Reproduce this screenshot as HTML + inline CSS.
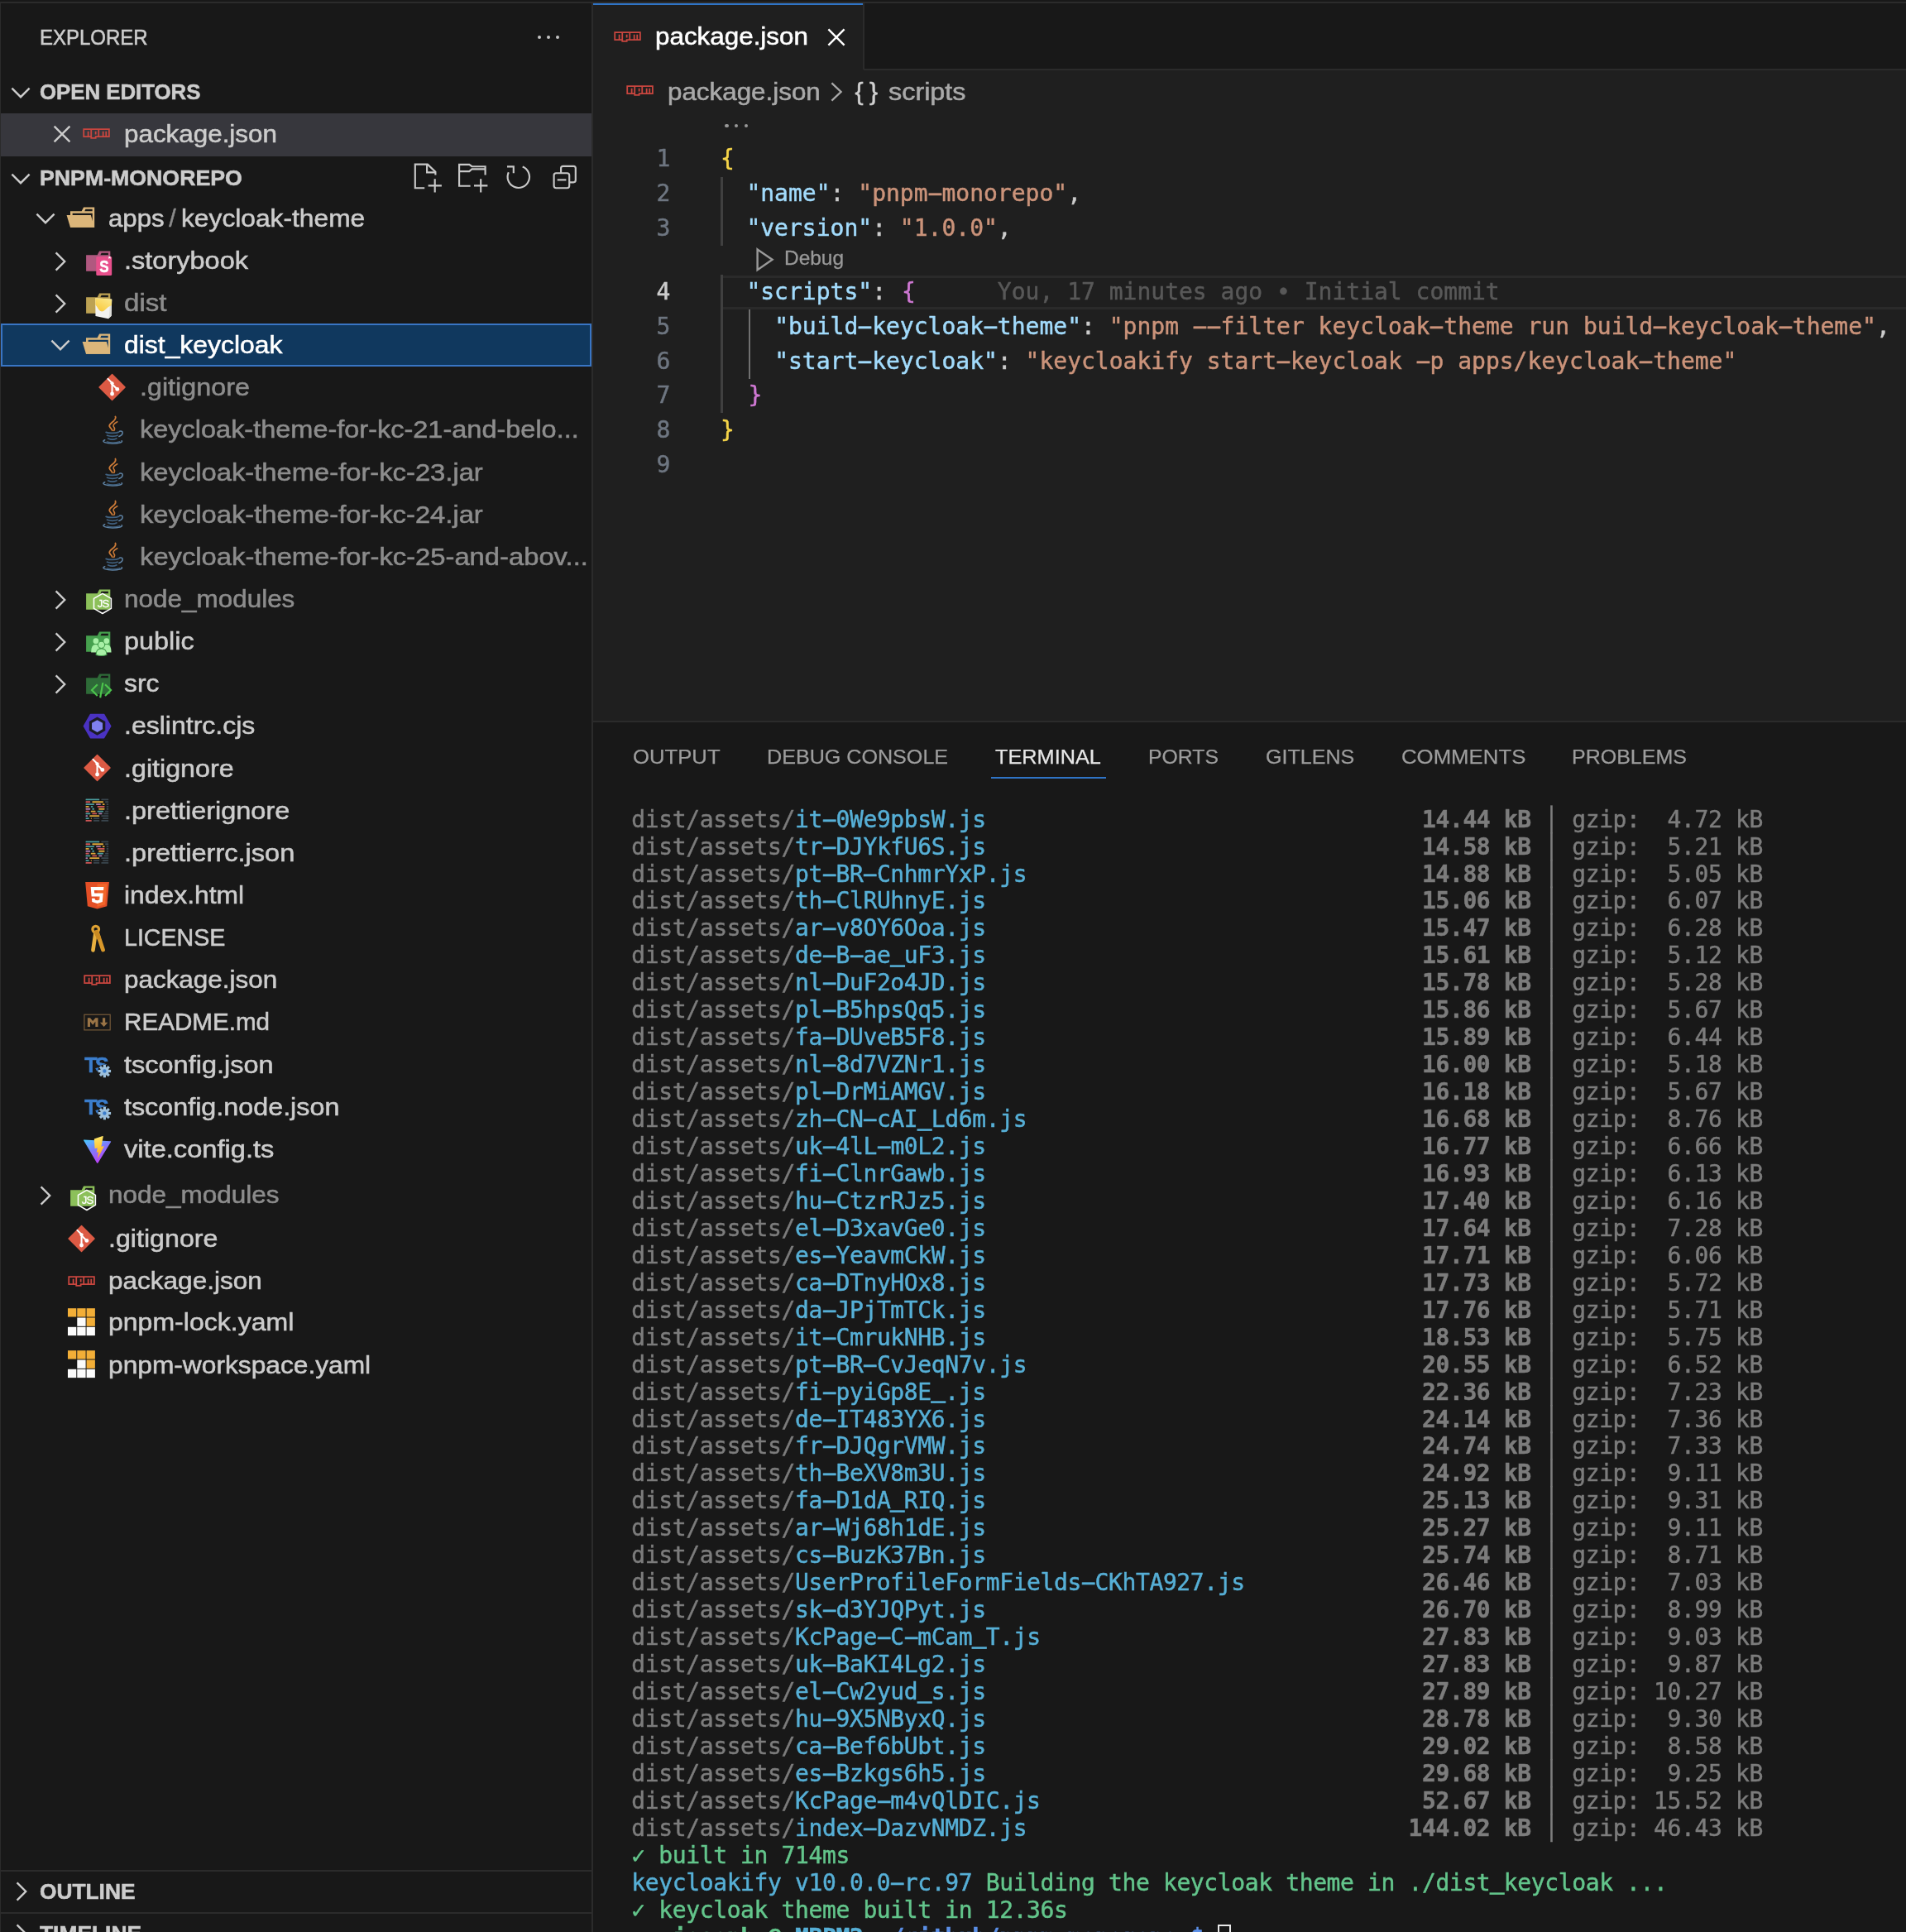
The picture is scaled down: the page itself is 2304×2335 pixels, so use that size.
<!DOCTYPE html>
<html lang="en"><head><meta charset="utf-8"><title>package.json — pnpm-monorepo</title>
<style>
html,body{margin:0;padding:0;background:#181818;}
body{width:2304px;height:2335px;overflow:hidden;position:relative;font-family:"Liberation Sans", "DejaVu Sans", sans-serif;}
#app{position:absolute;left:0;top:0;width:2304px;height:2335px;will-change:transform;}
.r{position:absolute;}
.s{position:absolute;overflow:visible;}
.t{position:absolute;white-space:pre;line-height:44px;height:44px;-webkit-text-stroke:0.55px currentColor;}
.t.m{font-family:"DejaVu Sans Mono", "Liberation Mono", monospace;-webkit-text-stroke:0.45px currentColor;}
.t.m span{-webkit-text-stroke:0.45px currentColor;}
.h{display:inline-block;transform:scaleX(2.1);}
</style></head>
<body>
<div id="app">
<div class="r" style="left:0.00px;top:0.00px;width:2304.00px;height:2335.00px;background:#181818;"></div>
<div class="r" style="left:717.00px;top:85.00px;width:1587.00px;height:787.00px;background:#1f1f1f;"></div>
<div class="r" style="left:0.00px;top:2.00px;width:2304.00px;height:2.00px;background:#2b2b2b;"></div>
<div class="r" style="left:0.00px;top:4.00px;width:1.20px;height:2335.00px;background:#2b2b2b;"></div>
<div class="r" style="left:715.00px;top:4.00px;width:2.00px;height:2335.00px;background:#2b2b2b;"></div>
<div class="t " style="left:48.40px;top:23.20px;font-size:25.5px;color:#cccccc;"><span id="t1" style="display:inline-block;transform-origin:0 50%;transform:scaleX(0.9406)">EXPLORER</span></div>
<div class="r" style="left:649.5px;top:42.5px;width:4.2px;height:4.2px;border-radius:50%;background:#c4c4c4"></div>
<div class="r" style="left:660.5px;top:42.5px;width:4.2px;height:4.2px;border-radius:50%;background:#c4c4c4"></div>
<div class="r" style="left:671.5px;top:42.5px;width:4.2px;height:4.2px;border-radius:50%;background:#c4c4c4"></div>
<svg class="s" style="left:10.50px;top:102.20px;" width="28.00" height="20.00" viewBox="0 0 28 20"><path d="M3.4,4.6 L14,15.2 L24.6,4.6" fill="none" stroke="#cccccc" stroke-width="2.4" stroke-linejoin="miter"/></svg>
<div class="t " style="left:48.30px;top:89.00px;font-size:25.5px;color:#cccccc;font-weight:bold;"><span id="t2" style="display:inline-block;transform-origin:0 50%;transform:scaleX(1.0115)">OPEN EDITORS</span></div>
<div class="r" style="left:1.20px;top:137.00px;width:713.80px;height:51.60px;background:#37373d;"></div>
<svg class="s" style="left:63.40px;top:149.60px;" width="24.00" height="24.00" viewBox="0 0 24 24"><path d="M2.5999999999999996,2.5999999999999996 L21.4,21.4 M21.4,2.5999999999999996 L2.5999999999999996,21.4" fill="none" stroke="#cccccc" stroke-width="2.4"/></svg>
<svg class="s" style="left:98.40px;top:143.05px;" width="37.10" height="37.10" viewBox="0 0 32 32"><path fill-rule="evenodd" d="M2,10.555H30v9.335H16v1.556H9.778V19.889H2Zm1.556,7.779H6.667V13.666H8.222v4.667H9.778V12.111H3.556Zm7.778-6.223v7.779h3.111V18.334h3.111V12.111Zm3.111,1.556H16v3.112H14.444Zm4.667-1.556v6.223h3.111V13.666h1.556v4.667h1.556V13.666h1.556v4.667h1.556V12.111Z" fill="#c9463f"/></svg>
<div class="t " style="left:150.00px;top:139.90px;font-size:30.16px;color:#cccccc;"><span id="t3" style="display:inline-block;transform-origin:0 50%;transform:scaleX(1.0407)">package.json</span></div>
<svg class="s" style="left:10.50px;top:205.60px;" width="28.00" height="20.00" viewBox="0 0 28 20"><path d="M3.4,4.6 L14,15.2 L24.6,4.6" fill="none" stroke="#cccccc" stroke-width="2.4" stroke-linejoin="miter"/></svg>
<div class="t " style="left:48.30px;top:192.60px;font-size:25.5px;color:#cccccc;font-weight:bold;"><span id="t4" style="display:inline-block;transform-origin:0 50%;transform:scaleX(1.0474)">PNPM-MONOREPO</span></div>
<svg class="s" style="left:0;top:0" width="716" height="260" viewBox="0 0 716 260"><g fill="none" stroke="#c8c8c8" stroke-width="2.15" stroke-linejoin="miter"><polyline points="513.2,227.2 501.8,227.2 501.8,198.6 516.9,198.6 526.4,207.7 526.4,211.5"/><polyline points="516.1,198.6 516.1,208.3 526.4,208.3"/><path d="M517.6,224.3 H533.9 M525.7,216.3 V232.5"/><polyline points="568.6,224.7 555.1,224.7 555.1,198.9 567.3,198.9 570.5,201.2 586.6,201.2 586.6,211.5"/><polyline points="555.1,207.1 567.3,207.1 570.5,204.3 586.6,204.3"/><path d="M573.0,224.3 H589.4 M581.2,216.3 V232.5"/><path d="M631.7,201.5 A13.2,13.2 0 1 1 614.8,208.2"/><polyline points="613.0,201.4 620.8,201.4 620.8,209.2"/><path d="M678.1,209.2 V203.3 Q678.1,200.8 680.7,200.8 H693.3 Q695.8,200.8 695.8,203.3 V217.8 Q695.8,220.3 693.3,220.3 H688.6"/><rect x="669.6" y="209.2" width="18.6" height="18.0" rx="2.6"/><path d="M673.7,217.4 H684.4"/></g></svg>
<svg class="s" style="left:40.50px;top:253.90px;" width="28.00" height="20.00" viewBox="0 0 28 20"><path d="M3.4,4.6 L14,15.2 L24.6,4.6" fill="none" stroke="#cccccc" stroke-width="2.4" stroke-linejoin="miter"/></svg>
<svg class="s" style="left:80.20px;top:244.05px;" width="37.10" height="37.10" viewBox="0 0 32 32"><path d="M27.4,5.5H18.2L16.1,9.7H4.3V26.5H29.5V5.5Zm0,18.7H6.6V11.8H27.4Zm0-14.5H19.2l1-2.1h7.1V9.7Z" fill="#dcb67a"/><polygon points="25.7 13.7 0.5 13.7 4.3 26.5 29.5 26.5 25.7 13.7" fill="#dcb67a"/></svg>
<div class="t " style="left:131.20px;top:241.70px;font-size:30.16px;color:#cccccc;"><span id="t5" style="display:inline-block;transform-origin:0 50%;transform:scaleX(1.0344)">apps</span></div>
<div class="t " style="left:204.20px;top:241.70px;font-size:30.16px;color:#8a8a8a;"><span id="t6">/</span></div>
<div class="t " style="left:218.90px;top:241.70px;font-size:30.16px;color:#cccccc;"><span id="t7" style="display:inline-block;transform-origin:0 50%;transform:scaleX(1.0524)">keycloak-theme</span></div>
<svg class="s" style="left:63.06px;top:301.84px;" width="20.00" height="28.00" viewBox="0 0 20 28"><path d="M4.6,3.4 L15.2,14 L4.6,24.6" fill="none" stroke="#cccccc" stroke-width="2.4" stroke-linejoin="miter"/></svg>
<svg class="s" style="left:98.76px;top:296.59px;" width="37.10" height="37.10" viewBox="0 0 32 32"><path d="M27.5,5.5H18.2L16.1,9.7H4.4V26.5H29.6V5.5Zm0,4.2H19.3l1.1-2.1h7.1Z" fill="#b0587f"/><rect x="14.9" y="11.2" width="16.3" height="19.9" rx="1.3" fill="#e8508c"/><path d="M27.9,11.2 h1.9 v2.6 l-0.95,-0.8 l-0.95,0.8z" fill="#fff"/><text transform="translate(23.2,27.3) scale(0.86,1)" font-family="Liberation Sans, sans-serif" font-weight="bold" font-size="17" text-anchor="middle" fill="#ffffff" stroke="#ffffff" stroke-width="0.5">S</text></svg>
<div class="t " style="left:149.90px;top:292.84px;font-size:30.16px;color:#cccccc;"><span id="t8" style="display:inline-block;transform-origin:0 50%;transform:scaleX(1.0786)">.storybook</span></div>
<svg class="s" style="left:63.06px;top:352.98px;" width="20.00" height="28.00" viewBox="0 0 20 28"><path d="M4.6,3.4 L15.2,14 L4.6,24.6" fill="none" stroke="#cccccc" stroke-width="2.4" stroke-linejoin="miter"/></svg>
<svg class="s" style="left:98.76px;top:347.73px;" width="37.10" height="37.10" viewBox="0 0 32 32"><path d="M27.5,5.5H18.2L16.1,9.7H4.4V26.5H29.6V5.5Zm0,4.2H19.3l1.1-2.1h7.1Z" fill="#bda253"/><defs><linearGradient id="gd" x1="0.2" y1="1" x2="0.9" y2="0"><stop offset="0" stop-color="#f8c93c"/><stop offset="1" stop-color="#fbe98e"/></linearGradient></defs><path d="M14,10.6 L31.2,11.8 L30.8,29.2 L27.6,32.2 L14.2,29.4Z" fill="#f2f2f0"/><path d="M29.6,11.7 L31.2,11.8 L30.8,29.2 L27.6,32.2 L28.4,29Z" fill="#dededa"/><path d="M14,10.6 L31.2,11.8 L31,18.2 Q27.4,19.4 24.4,22.6 Q20.4,26.6 17.4,22.4 Q15.8,19.4 14.1,17.4Z" fill="url(#gd)"/></svg>
<div class="t " style="left:149.90px;top:343.98px;font-size:30.16px;color:#8c8c8c;"><span id="t9" style="display:inline-block;transform-origin:0 50%;transform:scaleX(1.0962)">dist</span></div>
<div class="r" style="left:1.20px;top:391.40px;width:713.80px;height:51.60px;background:#10385e;box-sizing:border-box;border:2.3px solid #3975c4;"></div>
<svg class="s" style="left:59.06px;top:407.32px;" width="28.00" height="20.00" viewBox="0 0 28 20"><path d="M3.4,4.6 L14,15.2 L24.6,4.6" fill="none" stroke="#cccccc" stroke-width="2.4" stroke-linejoin="miter"/></svg>
<svg class="s" style="left:98.76px;top:397.47px;" width="37.10" height="37.10" viewBox="0 0 32 32"><path d="M27.4,5.5H18.2L16.1,9.7H4.3V26.5H29.5V5.5Zm0,18.7H6.6V11.8H27.4Zm0-14.5H19.2l1-2.1h7.1V9.7Z" fill="#dcb67a"/><polygon points="25.7 13.7 0.5 13.7 4.3 26.5 29.5 26.5 25.7 13.7" fill="#dcb67a"/></svg>
<div class="t " style="left:149.90px;top:395.12px;font-size:30.16px;color:#ffffff;"><span id="t10" style="display:inline-block;transform-origin:0 50%;transform:scaleX(1.0576)">dist_keycloak</span></div>
<svg class="s" style="left:117.30px;top:449.91px;" width="37.10" height="37.10" viewBox="0 0 32 32"><path d="M16,2.2 L29.4,15.6 L16,29 L2.6,15.6Z" fill="#dc5a44" stroke="#dc5a44" stroke-width="1.2" stroke-linejoin="round"/><g stroke="#ffffff" stroke-width="1.8" fill="none" stroke-linecap="round"><path d="M11.6,6.8 L16,11.2 L16,22"/><path d="M16,12.2 L21,17.2"/></g><g fill="#ffffff"><circle cx="16" cy="11.4" r="1.8"/><circle cx="16" cy="22.4" r="2.1"/><circle cx="21.4" cy="17.6" r="2.1"/></g></svg>
<div class="t " style="left:168.50px;top:446.26px;font-size:30.16px;color:#8c8c8c;"><span id="t11" style="display:inline-block;transform-origin:0 50%;transform:scaleX(1.0709)">.gitignore</span></div>
<svg class="s" style="left:117.30px;top:501.05px;" width="37.10" height="37.10" viewBox="0 0 32 32"><g fill="none" stroke-linecap="round"><path d="M19.4,2.2 C21.5,6.6 11.6,9 13.3,12.4 C14.1,14 15.7,15.2 16.2,16.6" stroke="#cc7b38" stroke-width="1.6"/><path d="M21.4,7.6 C17,9.8 16.5,11.6 18,13.4 C19,14.6 18.6,15.8 17.9,16.8" stroke="#cc7b38" stroke-width="1.35"/><path d="M9.6,18.4 C13,19.8 20,19.6 23,18.2" stroke="#40607f" stroke-width="1.5"/><path d="M10.8,21.8 C13.6,23 19.2,23 21.6,21.8" stroke="#40607f" stroke-width="1.5"/><path d="M11.8,25 C14.2,26 18.4,26 20.6,25" stroke="#40607f" stroke-width="1.5"/><path d="M23.8,17.4 C28.2,16.2 27.8,21.4 23.2,22.8" stroke="#5f84a6" stroke-width="1.3"/><path d="M8.4,26.6 C3.8,28.2 10,30.2 16.4,30.2 C22.6,30.2 27.6,28.8 26,27.4" stroke="#5f84a6" stroke-width="1.3"/><path d="M10.6,28.4 C14,29.4 20,29.4 24,28.2" stroke="#40607f" stroke-width="1.1"/></g></svg>
<div class="t " style="left:168.50px;top:497.40px;font-size:30.16px;color:#8c8c8c;"><span id="t12" style="display:inline-block;transform-origin:0 50%;transform:scaleX(1.0771)">keycloak-theme-for-kc-21-and-belo...</span></div>
<svg class="s" style="left:117.30px;top:552.19px;" width="37.10" height="37.10" viewBox="0 0 32 32"><g fill="none" stroke-linecap="round"><path d="M19.4,2.2 C21.5,6.6 11.6,9 13.3,12.4 C14.1,14 15.7,15.2 16.2,16.6" stroke="#cc7b38" stroke-width="1.6"/><path d="M21.4,7.6 C17,9.8 16.5,11.6 18,13.4 C19,14.6 18.6,15.8 17.9,16.8" stroke="#cc7b38" stroke-width="1.35"/><path d="M9.6,18.4 C13,19.8 20,19.6 23,18.2" stroke="#40607f" stroke-width="1.5"/><path d="M10.8,21.8 C13.6,23 19.2,23 21.6,21.8" stroke="#40607f" stroke-width="1.5"/><path d="M11.8,25 C14.2,26 18.4,26 20.6,25" stroke="#40607f" stroke-width="1.5"/><path d="M23.8,17.4 C28.2,16.2 27.8,21.4 23.2,22.8" stroke="#5f84a6" stroke-width="1.3"/><path d="M8.4,26.6 C3.8,28.2 10,30.2 16.4,30.2 C22.6,30.2 27.6,28.8 26,27.4" stroke="#5f84a6" stroke-width="1.3"/><path d="M10.6,28.4 C14,29.4 20,29.4 24,28.2" stroke="#40607f" stroke-width="1.1"/></g></svg>
<div class="t " style="left:168.50px;top:548.54px;font-size:30.16px;color:#8c8c8c;"><span id="t13" style="display:inline-block;transform-origin:0 50%;transform:scaleX(1.0855)">keycloak-theme-for-kc-23.jar</span></div>
<svg class="s" style="left:117.30px;top:603.33px;" width="37.10" height="37.10" viewBox="0 0 32 32"><g fill="none" stroke-linecap="round"><path d="M19.4,2.2 C21.5,6.6 11.6,9 13.3,12.4 C14.1,14 15.7,15.2 16.2,16.6" stroke="#cc7b38" stroke-width="1.6"/><path d="M21.4,7.6 C17,9.8 16.5,11.6 18,13.4 C19,14.6 18.6,15.8 17.9,16.8" stroke="#cc7b38" stroke-width="1.35"/><path d="M9.6,18.4 C13,19.8 20,19.6 23,18.2" stroke="#40607f" stroke-width="1.5"/><path d="M10.8,21.8 C13.6,23 19.2,23 21.6,21.8" stroke="#40607f" stroke-width="1.5"/><path d="M11.8,25 C14.2,26 18.4,26 20.6,25" stroke="#40607f" stroke-width="1.5"/><path d="M23.8,17.4 C28.2,16.2 27.8,21.4 23.2,22.8" stroke="#5f84a6" stroke-width="1.3"/><path d="M8.4,26.6 C3.8,28.2 10,30.2 16.4,30.2 C22.6,30.2 27.6,28.8 26,27.4" stroke="#5f84a6" stroke-width="1.3"/><path d="M10.6,28.4 C14,29.4 20,29.4 24,28.2" stroke="#40607f" stroke-width="1.1"/></g></svg>
<div class="t " style="left:168.50px;top:599.68px;font-size:30.16px;color:#8c8c8c;"><span id="t14" style="display:inline-block;transform-origin:0 50%;transform:scaleX(1.0855)">keycloak-theme-for-kc-24.jar</span></div>
<svg class="s" style="left:117.30px;top:654.47px;" width="37.10" height="37.10" viewBox="0 0 32 32"><g fill="none" stroke-linecap="round"><path d="M19.4,2.2 C21.5,6.6 11.6,9 13.3,12.4 C14.1,14 15.7,15.2 16.2,16.6" stroke="#cc7b38" stroke-width="1.6"/><path d="M21.4,7.6 C17,9.8 16.5,11.6 18,13.4 C19,14.6 18.6,15.8 17.9,16.8" stroke="#cc7b38" stroke-width="1.35"/><path d="M9.6,18.4 C13,19.8 20,19.6 23,18.2" stroke="#40607f" stroke-width="1.5"/><path d="M10.8,21.8 C13.6,23 19.2,23 21.6,21.8" stroke="#40607f" stroke-width="1.5"/><path d="M11.8,25 C14.2,26 18.4,26 20.6,25" stroke="#40607f" stroke-width="1.5"/><path d="M23.8,17.4 C28.2,16.2 27.8,21.4 23.2,22.8" stroke="#5f84a6" stroke-width="1.3"/><path d="M8.4,26.6 C3.8,28.2 10,30.2 16.4,30.2 C22.6,30.2 27.6,28.8 26,27.4" stroke="#5f84a6" stroke-width="1.3"/><path d="M10.6,28.4 C14,29.4 20,29.4 24,28.2" stroke="#40607f" stroke-width="1.1"/></g></svg>
<div class="t " style="left:168.50px;top:650.82px;font-size:30.16px;color:#8c8c8c;"><span id="t15" style="display:inline-block;transform-origin:0 50%;transform:scaleX(1.0861)">keycloak-theme-for-kc-25-and-abov...</span></div>
<svg class="s" style="left:63.06px;top:710.96px;" width="20.00" height="28.00" viewBox="0 0 20 28"><path d="M4.6,3.4 L15.2,14 L4.6,24.6" fill="none" stroke="#cccccc" stroke-width="2.4" stroke-linejoin="miter"/></svg>
<svg class="s" style="left:98.76px;top:705.71px;" width="37.10" height="37.10" viewBox="0 0 32 32"><path d="M27.5,5.5H18.2L16.1,9.7H4.4V26.5H29.6V5.5Zm0,4.2H19.3l1.1-2.1h7.1Z" fill="#8cc05a"/><polygon points="21.50,9.80 30.51,15.00 30.51,25.40 21.50,30.60 12.49,25.40 12.49,15.00" fill="none" stroke="#ffffff" stroke-width="1.35" stroke-linejoin="round"/><text x="22.1" y="24.3" font-family="Liberation Sans, sans-serif" font-size="11.3" text-anchor="middle" letter-spacing="-0.6" fill="#ffffff" stroke="#ffffff" stroke-width="0.25">JS</text></svg>
<div class="t " style="left:149.90px;top:701.96px;font-size:30.16px;color:#8c8c8c;"><span id="t16" style="display:inline-block;transform-origin:0 50%;transform:scaleX(1.0430)">node_modules</span></div>
<svg class="s" style="left:63.06px;top:762.10px;" width="20.00" height="28.00" viewBox="0 0 20 28"><path d="M4.6,3.4 L15.2,14 L4.6,24.6" fill="none" stroke="#cccccc" stroke-width="2.4" stroke-linejoin="miter"/></svg>
<svg class="s" style="left:98.76px;top:756.85px;" width="37.10" height="37.10" viewBox="0 0 32 32"><path d="M27.5,5.5H18.2L16.1,9.7H4.4V26.5H29.6V5.5Zm0,4.2H19.3l1.1-2.1h7.1Z" fill="#46a04e"/><g fill="#a8f0a6"><circle cx="14.6" cy="15.3" r="2.9"/><circle cx="25.7" cy="15.3" r="2.9"/><path d="M9.6,27.2 Q9.4,18.9 14.4,18.9 Q17.6,18.9 18.3,22 L18.3,27.2Z"/><path d="M30.7,27.2 Q30.9,18.9 25.9,18.9 Q22.7,18.9 22,22 L22,27.2Z"/><circle cx="20.3" cy="19.3" r="3.5" stroke="#46a04e" stroke-width="0.9"/><path d="M14.8,29.8 Q14.6,23.2 20.3,23.2 Q26,23.2 25.8,29.8 Q20.3,31.6 14.8,29.8Z" stroke="#46a04e" stroke-width="0.9"/></g></svg>
<div class="t " style="left:149.90px;top:753.10px;font-size:30.16px;color:#cccccc;"><span id="t17" style="display:inline-block;transform-origin:0 50%;transform:scaleX(1.0743)">public</span></div>
<svg class="s" style="left:63.06px;top:813.24px;" width="20.00" height="28.00" viewBox="0 0 20 28"><path d="M4.6,3.4 L15.2,14 L4.6,24.6" fill="none" stroke="#cccccc" stroke-width="2.4" stroke-linejoin="miter"/></svg>
<svg class="s" style="left:98.76px;top:807.99px;" width="37.10" height="37.10" viewBox="0 0 32 32"><path d="M27.5,5.5H18.2L16.1,9.7H4.4V26.5H29.6V5.5Zm0,4.2H19.3l1.1-2.1h7.1Z" fill="#2e6b38"/><g fill="none" stroke="#4cc44c" stroke-width="1.9" stroke-linecap="butt"><path d="M16.2,16.6 L10.4,22.5 L16.2,28.4"/><path d="M24.2,16.6 L30.2,22.5 L24.2,28.4"/><path d="M21.9,14.8 L19.1,30.4"/></g></svg>
<div class="t " style="left:149.90px;top:804.24px;font-size:30.16px;color:#cccccc;"><span id="t18" style="display:inline-block;transform-origin:0 50%;transform:scaleX(1.0535)">src</span></div>
<svg class="s" style="left:98.76px;top:859.03px;" width="37.10" height="37.10" viewBox="0 0 32 32"><path d="M9,3.8 L23,3.8 L30,16 L23,28.2 L9,28.2 L2,16Z" fill="#4a32c2" stroke="#4a32c2" stroke-width="1.2" stroke-linejoin="round"/><path d="M16,6.4 L24.4,11.2 L24.4,20.8 L16,25.6 L7.6,20.8 L7.6,11.2Z" fill="#1b1b26"/><path d="M16,9.6 L21.6,12.8 L21.6,19.2 L16,22.4 L10.4,19.2 L10.4,12.8Z" fill="#8080f2"/></svg>
<div class="t " style="left:149.90px;top:855.38px;font-size:30.16px;color:#cccccc;"><span id="t19" style="display:inline-block;transform-origin:0 50%;transform:scaleX(1.0618)">.eslintrc.cjs</span></div>
<svg class="s" style="left:98.76px;top:910.17px;" width="37.10" height="37.10" viewBox="0 0 32 32"><path d="M16,2.2 L29.4,15.6 L16,29 L2.6,15.6Z" fill="#dc5a44" stroke="#dc5a44" stroke-width="1.2" stroke-linejoin="round"/><g stroke="#ffffff" stroke-width="1.8" fill="none" stroke-linecap="round"><path d="M11.6,6.8 L16,11.2 L16,22"/><path d="M16,12.2 L21,17.2"/></g><g fill="#ffffff"><circle cx="16" cy="11.4" r="1.8"/><circle cx="16" cy="22.4" r="2.1"/><circle cx="21.4" cy="17.6" r="2.1"/></g></svg>
<div class="t " style="left:149.90px;top:906.52px;font-size:30.16px;color:#cccccc;"><span id="t20" style="display:inline-block;transform-origin:0 50%;transform:scaleX(1.0693)">.gitignore</span></div>
<svg class="s" style="left:98.76px;top:961.31px;" width="37.10" height="37.10" viewBox="0 0 32 32"><rect x="3.90" y="3.90" width="14.41" height="1.55" rx="0.5" fill="#4a9c9d"/><rect x="20.17" y="3.90" width="7.63" height="1.55" rx="0.5" fill="#39454d"/><rect x="3.90" y="6.34" width="4.92" height="1.55" rx="0.5" fill="#cf5555"/><rect x="10.68" y="6.34" width="11.70" height="1.55" rx="0.5" fill="#d9a338"/><rect x="24.23" y="6.34" width="3.57" height="1.55" rx="0.5" fill="#39454d"/><rect x="3.90" y="8.78" width="8.99" height="1.55" rx="0.5" fill="#4a9c9d"/><rect x="14.74" y="8.78" width="4.92" height="1.55" rx="0.5" fill="#a877a8"/><rect x="21.52" y="8.78" width="2.21" height="1.55" rx="0.5" fill="#d9a338"/><rect x="25.59" y="8.78" width="2.21" height="1.55" rx="0.5" fill="#39454d"/><rect x="3.90" y="11.22" width="3.57" height="1.55" rx="0.5" fill="#d9a338"/><rect x="9.32" y="11.22" width="2.21" height="1.55" rx="0.5" fill="#4a9c9d"/><rect x="16.10" y="11.22" width="7.63" height="1.55" rx="0.5" fill="#cf5555"/><rect x="25.59" y="11.22" width="2.21" height="1.55" rx="0.5" fill="#39454d"/><rect x="3.90" y="13.66" width="4.92" height="1.55" rx="0.5" fill="#a877a8"/><rect x="10.68" y="13.66" width="2.21" height="1.55" rx="0.5" fill="#4a9c9d"/><rect x="17.46" y="13.66" width="6.28" height="1.55" rx="0.5" fill="#d9a338"/><rect x="25.59" y="13.66" width="2.21" height="1.55" rx="0.5" fill="#39454d"/><rect x="3.90" y="16.10" width="3.57" height="1.55" rx="0.5" fill="#cf5555"/><rect x="9.32" y="16.10" width="4.92" height="1.55" rx="0.5" fill="#d9a338"/><rect x="16.10" y="16.10" width="6.28" height="1.55" rx="0.5" fill="#4a9c9d"/><rect x="24.23" y="16.10" width="3.57" height="1.55" rx="0.5" fill="#39454d"/><rect x="3.90" y="18.54" width="4.92" height="1.55" rx="0.5" fill="#4a9c9d"/><rect x="10.68" y="18.54" width="4.92" height="1.55" rx="0.5" fill="#cf5555"/><rect x="17.46" y="18.54" width="3.57" height="1.55" rx="0.5" fill="#a877a8"/><rect x="22.88" y="18.54" width="4.92" height="1.55" rx="0.5" fill="#39454d"/><rect x="3.90" y="20.98" width="2.21" height="1.55" rx="0.5" fill="#a877a8"/><rect x="7.97" y="20.98" width="10.34" height="1.55" rx="0.5" fill="#d9a338"/><rect x="20.17" y="20.98" width="7.63" height="1.55" rx="0.5" fill="#39454d"/><rect x="3.90" y="23.42" width="3.57" height="1.55" rx="0.5" fill="#4a9c9d"/><rect x="9.32" y="23.42" width="0.86" height="1.55" rx="0.5" fill="#d9a338"/><rect x="12.03" y="23.42" width="6.28" height="1.55" rx="0.5" fill="#39454d"/><rect x="21.52" y="23.42" width="6.28" height="1.55" rx="0.5" fill="#39454d"/><rect x="3.90" y="25.86" width="6.28" height="1.55" rx="0.5" fill="#cf5555"/><rect x="12.03" y="25.86" width="6.28" height="1.55" rx="0.5" fill="#39454d"/><rect x="20.17" y="25.86" width="7.63" height="1.55" rx="0.5" fill="#39454d"/></svg>
<div class="t " style="left:149.90px;top:957.66px;font-size:30.16px;color:#cccccc;"><span id="t21" style="display:inline-block;transform-origin:0 50%;transform:scaleX(1.0763)">.prettierignore</span></div>
<svg class="s" style="left:98.76px;top:1012.45px;" width="37.10" height="37.10" viewBox="0 0 32 32"><rect x="3.90" y="3.90" width="14.41" height="1.55" rx="0.5" fill="#4a9c9d"/><rect x="20.17" y="3.90" width="7.63" height="1.55" rx="0.5" fill="#39454d"/><rect x="3.90" y="6.34" width="4.92" height="1.55" rx="0.5" fill="#cf5555"/><rect x="10.68" y="6.34" width="11.70" height="1.55" rx="0.5" fill="#d9a338"/><rect x="24.23" y="6.34" width="3.57" height="1.55" rx="0.5" fill="#39454d"/><rect x="3.90" y="8.78" width="8.99" height="1.55" rx="0.5" fill="#4a9c9d"/><rect x="14.74" y="8.78" width="4.92" height="1.55" rx="0.5" fill="#a877a8"/><rect x="21.52" y="8.78" width="2.21" height="1.55" rx="0.5" fill="#d9a338"/><rect x="25.59" y="8.78" width="2.21" height="1.55" rx="0.5" fill="#39454d"/><rect x="3.90" y="11.22" width="3.57" height="1.55" rx="0.5" fill="#d9a338"/><rect x="9.32" y="11.22" width="2.21" height="1.55" rx="0.5" fill="#4a9c9d"/><rect x="16.10" y="11.22" width="7.63" height="1.55" rx="0.5" fill="#cf5555"/><rect x="25.59" y="11.22" width="2.21" height="1.55" rx="0.5" fill="#39454d"/><rect x="3.90" y="13.66" width="4.92" height="1.55" rx="0.5" fill="#a877a8"/><rect x="10.68" y="13.66" width="2.21" height="1.55" rx="0.5" fill="#4a9c9d"/><rect x="17.46" y="13.66" width="6.28" height="1.55" rx="0.5" fill="#d9a338"/><rect x="25.59" y="13.66" width="2.21" height="1.55" rx="0.5" fill="#39454d"/><rect x="3.90" y="16.10" width="3.57" height="1.55" rx="0.5" fill="#cf5555"/><rect x="9.32" y="16.10" width="4.92" height="1.55" rx="0.5" fill="#d9a338"/><rect x="16.10" y="16.10" width="6.28" height="1.55" rx="0.5" fill="#4a9c9d"/><rect x="24.23" y="16.10" width="3.57" height="1.55" rx="0.5" fill="#39454d"/><rect x="3.90" y="18.54" width="4.92" height="1.55" rx="0.5" fill="#4a9c9d"/><rect x="10.68" y="18.54" width="4.92" height="1.55" rx="0.5" fill="#cf5555"/><rect x="17.46" y="18.54" width="3.57" height="1.55" rx="0.5" fill="#a877a8"/><rect x="22.88" y="18.54" width="4.92" height="1.55" rx="0.5" fill="#39454d"/><rect x="3.90" y="20.98" width="2.21" height="1.55" rx="0.5" fill="#a877a8"/><rect x="7.97" y="20.98" width="10.34" height="1.55" rx="0.5" fill="#d9a338"/><rect x="20.17" y="20.98" width="7.63" height="1.55" rx="0.5" fill="#39454d"/><rect x="3.90" y="23.42" width="3.57" height="1.55" rx="0.5" fill="#4a9c9d"/><rect x="9.32" y="23.42" width="0.86" height="1.55" rx="0.5" fill="#d9a338"/><rect x="12.03" y="23.42" width="6.28" height="1.55" rx="0.5" fill="#39454d"/><rect x="21.52" y="23.42" width="6.28" height="1.55" rx="0.5" fill="#39454d"/><rect x="3.90" y="25.86" width="6.28" height="1.55" rx="0.5" fill="#cf5555"/><rect x="12.03" y="25.86" width="6.28" height="1.55" rx="0.5" fill="#39454d"/><rect x="20.17" y="25.86" width="7.63" height="1.55" rx="0.5" fill="#39454d"/></svg>
<div class="t " style="left:149.90px;top:1008.80px;font-size:30.16px;color:#cccccc;"><span id="t22" style="display:inline-block;transform-origin:0 50%;transform:scaleX(1.0800)">.prettierrc.json</span></div>
<svg class="s" style="left:98.76px;top:1061.79px;" width="37.10" height="37.10" viewBox="0 0 32 32"><path d="M3.6,3.4 L28.4,3.4 L26.1,28.6 L16,31.4 L5.9,28.6Z" fill="#e44f26"/><path d="M16,5.4 L16,29.3 L24.2,27 L26.1,5.4Z" fill="#f1662a"/><path d="M9.2,8.6 H22.8 L22.5,12 H12.8 L13.1,15.2 H22.2 L21.4,24.2 L16,25.8 L10.6,24.2 L10.3,20.4 H13.5 L13.7,22 L16,22.6 L18.3,22 L18.6,18.5 H10Z" fill="#ffffff"/></svg>
<div class="t " style="left:149.90px;top:1059.94px;font-size:30.16px;color:#cccccc;"><span id="t23" style="display:inline-block;transform-origin:0 50%;transform:scaleX(1.0560)">index.html</span></div>
<svg class="s" style="left:98.76px;top:1114.73px;" width="37.10" height="37.10" viewBox="0 0 32 32"><g fill="none" stroke="#d8982a" stroke-linecap="round"><circle cx="14.4" cy="7" r="3.3" stroke-width="2.8" stroke="#dfa233"/><path d="M16,10.4 L22,28.4" stroke-width="4.2"/><path d="M14.2,10.8 L11.6,28.8" stroke-width="4" stroke="#e8b040"/><path d="M15,10 L17.4,15.6" stroke-width="4.6" stroke="#c98a22"/></g></svg>
<div class="t " style="left:149.90px;top:1111.08px;font-size:30.16px;color:#cccccc;"><span id="t24" style="display:inline-block;transform-origin:0 50%;transform:scaleX(0.9488)">LICENSE</span></div>
<svg class="s" style="left:98.76px;top:1165.87px;" width="37.10" height="37.10" viewBox="0 0 32 32"><path fill-rule="evenodd" d="M2,10.555H30v9.335H16v1.556H9.778V19.889H2Zm1.556,7.779H6.667V13.666H8.222v4.667H9.778V12.111H3.556Zm7.778-6.223v7.779h3.111V18.334h3.111V12.111Zm3.111,1.556H16v3.112H14.444Zm4.667-1.556v6.223h3.111V13.666h1.556v4.667h1.556V13.666h1.556v4.667h1.556V12.111Z" fill="#c9463f"/></svg>
<div class="t " style="left:149.90px;top:1162.22px;font-size:30.16px;color:#cccccc;"><span id="t25" style="display:inline-block;transform-origin:0 50%;transform:scaleX(1.0418)">package.json</span></div>
<svg class="s" style="left:98.76px;top:1217.01px;" width="37.10" height="37.10" viewBox="0 0 32 32"><rect x="2.5" y="7.955" width="27" height="16.091" fill="none" stroke="#7a5c3a" stroke-width="1"/><polygon points="5.909 20.636 5.909 11.364 8.636 11.364 11.364 14.773 14.091 11.364 16.818 11.364 16.818 20.636 14.091 20.636 14.091 15.318 11.364 18.727 8.636 15.318 8.636 20.636 5.909 20.636" fill="#9a7446"/><polygon points="22.955 20.636 18.864 16.136 21.591 16.136 21.591 11.364 24.318 11.364 24.318 16.136 27.045 16.136 22.955 20.636" fill="#9a7446"/></svg>
<div class="t " style="left:149.90px;top:1213.36px;font-size:30.16px;color:#cccccc;"><span id="t26" style="display:inline-block;transform-origin:0 50%;transform:scaleX(0.9819)">README.md</span></div>
<svg class="s" style="left:98.76px;top:1268.15px;" width="37.10" height="37.10" viewBox="0 0 32 32"><text x="2.9" y="24.2" font-family="Liberation Sans, sans-serif" font-weight="700" font-size="21.6" letter-spacing="-2.2" fill="#3b7dcc" stroke="#3b7dcc" stroke-width="0.5">TS</text><circle cx="23.6" cy="22.9" r="6.9" fill="#181818"/><circle cx="23.6" cy="22.9" r="4.54" fill="#9dc0dc"/><rect x="27.25" y="21.51" width="3.02" height="2.77" fill="#9dc0dc" transform="rotate(0 28.77 22.90)"/><rect x="25.74" y="25.17" width="3.02" height="2.77" fill="#9dc0dc" transform="rotate(45 27.25 26.55)"/><rect x="22.09" y="26.68" width="3.02" height="2.77" fill="#9dc0dc" transform="rotate(90 23.60 28.07)"/><rect x="18.44" y="25.17" width="3.02" height="2.77" fill="#9dc0dc" transform="rotate(135 19.95 26.55)"/><rect x="16.92" y="21.51" width="3.02" height="2.77" fill="#9dc0dc" transform="rotate(180 18.43 22.90)"/><rect x="18.44" y="17.86" width="3.02" height="2.77" fill="#9dc0dc" transform="rotate(225 19.95 19.25)"/><rect x="22.09" y="16.35" width="3.02" height="2.77" fill="#9dc0dc" transform="rotate(270 23.60 17.73)"/><rect x="25.74" y="17.86" width="3.02" height="2.77" fill="#9dc0dc" transform="rotate(315 27.25 19.25)"/><circle cx="23.6" cy="22.9" r="1.89" fill="#3b7dcc"/></svg>
<div class="t " style="left:149.90px;top:1264.50px;font-size:30.16px;color:#cccccc;"><span id="t27" style="display:inline-block;transform-origin:0 50%;transform:scaleX(1.0776)">tsconfig.json</span></div>
<svg class="s" style="left:98.76px;top:1319.29px;" width="37.10" height="37.10" viewBox="0 0 32 32"><text x="2.9" y="24.2" font-family="Liberation Sans, sans-serif" font-weight="700" font-size="21.6" letter-spacing="-2.2" fill="#3b7dcc" stroke="#3b7dcc" stroke-width="0.5">TS</text><circle cx="23.6" cy="22.9" r="6.9" fill="#181818"/><circle cx="23.6" cy="22.9" r="4.54" fill="#9dc0dc"/><rect x="27.25" y="21.51" width="3.02" height="2.77" fill="#9dc0dc" transform="rotate(0 28.77 22.90)"/><rect x="25.74" y="25.17" width="3.02" height="2.77" fill="#9dc0dc" transform="rotate(45 27.25 26.55)"/><rect x="22.09" y="26.68" width="3.02" height="2.77" fill="#9dc0dc" transform="rotate(90 23.60 28.07)"/><rect x="18.44" y="25.17" width="3.02" height="2.77" fill="#9dc0dc" transform="rotate(135 19.95 26.55)"/><rect x="16.92" y="21.51" width="3.02" height="2.77" fill="#9dc0dc" transform="rotate(180 18.43 22.90)"/><rect x="18.44" y="17.86" width="3.02" height="2.77" fill="#9dc0dc" transform="rotate(225 19.95 19.25)"/><rect x="22.09" y="16.35" width="3.02" height="2.77" fill="#9dc0dc" transform="rotate(270 23.60 17.73)"/><rect x="25.74" y="17.86" width="3.02" height="2.77" fill="#9dc0dc" transform="rotate(315 27.25 19.25)"/><circle cx="23.6" cy="22.9" r="1.89" fill="#3b7dcc"/></svg>
<div class="t " style="left:149.90px;top:1315.64px;font-size:30.16px;color:#cccccc;"><span id="t28" style="display:inline-block;transform-origin:0 50%;transform:scaleX(1.0710)">tsconfig.node.json</span></div>
<svg class="s" style="left:98.76px;top:1370.43px;" width="37.10" height="37.10" viewBox="0 0 32 32"><defs><linearGradient id="gv" x1="0.1" y1="0" x2="0.6" y2="1"><stop offset="0" stop-color="#49c7ff"/><stop offset="0.45" stop-color="#7d7bfb"/><stop offset="1" stop-color="#c23cf8"/></linearGradient><linearGradient id="gb" x1="0.4" y1="0" x2="0.5" y2="1"><stop offset="0" stop-color="#ffe86a"/><stop offset="0.5" stop-color="#ffc83a"/><stop offset="1" stop-color="#ff9f1c"/></linearGradient></defs><path d="M2.2,6.4 L29.8,8 Q30.6,8 30.2,8.8 L16.8,30.6 Q16.2,31.4 15.6,30.6 L1.8,7.2 Q1.4,6.4 2.2,6.4Z" fill="url(#gv)"/><path d="M21.6,2.6 L13.2,5.4 Q12.8,5.5 12.8,6 L13.4,15.2 Q13.4,15.8 14,15.6 L16.2,15 L15.4,19.2 Q15.3,19.8 15.9,19.6 L17.4,19.2 L16.4,25.4 Q16.4,26 16.8,25.4 L23,13.6 Q23.2,13 22.6,13.1 L20.2,13.6 L22.2,3.2 Q22.3,2.5 21.6,2.6Z" fill="url(#gb)"/></svg>
<div class="t " style="left:149.90px;top:1366.78px;font-size:30.16px;color:#cccccc;"><span id="t29" style="display:inline-block;transform-origin:0 50%;transform:scaleX(1.0819)">vite.config.ts</span></div>
<svg class="s" style="left:44.50px;top:1431.40px;" width="20.00" height="28.00" viewBox="0 0 20 28"><path d="M4.6,3.4 L15.2,14 L4.6,24.6" fill="none" stroke="#cccccc" stroke-width="2.4" stroke-linejoin="miter"/></svg>
<svg class="s" style="left:80.20px;top:1426.75px;" width="37.10" height="37.10" viewBox="0 0 32 32"><path d="M27.5,5.5H18.2L16.1,9.7H4.4V26.5H29.6V5.5Zm0,4.2H19.3l1.1-2.1h7.1Z" fill="#8cc05a"/><polygon points="21.50,9.80 30.51,15.00 30.51,25.40 21.50,30.60 12.49,25.40 12.49,15.00" fill="none" stroke="#ffffff" stroke-width="1.35" stroke-linejoin="round"/><text x="22.1" y="24.3" font-family="Liberation Sans, sans-serif" font-size="11.3" text-anchor="middle" letter-spacing="-0.6" fill="#ffffff" stroke="#ffffff" stroke-width="0.25">JS</text></svg>
<div class="t " style="left:131.20px;top:1422.40px;font-size:30.16px;color:#8c8c8c;"><span id="t30" style="display:inline-block;transform-origin:0 50%;transform:scaleX(1.0440)">node_modules</span></div>
<svg class="s" style="left:80.20px;top:1478.85px;" width="37.10" height="37.10" viewBox="0 0 32 32"><path d="M16,2.2 L29.4,15.6 L16,29 L2.6,15.6Z" fill="#dc5a44" stroke="#dc5a44" stroke-width="1.2" stroke-linejoin="round"/><g stroke="#ffffff" stroke-width="1.8" fill="none" stroke-linecap="round"><path d="M11.6,6.8 L16,11.2 L16,22"/><path d="M16,12.2 L21,17.2"/></g><g fill="#ffffff"><circle cx="16" cy="11.4" r="1.8"/><circle cx="16" cy="22.4" r="2.1"/><circle cx="21.4" cy="17.6" r="2.1"/></g></svg>
<div class="t " style="left:131.20px;top:1474.60px;font-size:30.16px;color:#cccccc;"><span id="t31" style="display:inline-block;transform-origin:0 50%;transform:scaleX(1.0676)">.gitignore</span></div>
<svg class="s" style="left:80.20px;top:1530.45px;" width="37.10" height="37.10" viewBox="0 0 32 32"><path fill-rule="evenodd" d="M2,10.555H30v9.335H16v1.556H9.778V19.889H2Zm1.556,7.779H6.667V13.666H8.222v4.667H9.778V12.111H3.556Zm7.778-6.223v7.779h3.111V18.334h3.111V12.111Zm3.111,1.556H16v3.112H14.444Zm4.667-1.556v6.223h3.111V13.666h1.556v4.667h1.556V13.666h1.556v4.667h1.556V12.111Z" fill="#c9463f"/></svg>
<div class="t " style="left:131.20px;top:1526.20px;font-size:30.16px;color:#cccccc;"><span id="t32" style="display:inline-block;transform-origin:0 50%;transform:scaleX(1.0452)">package.json</span></div>
<svg class="s" style="left:80.20px;top:1578.75px;" width="37.10" height="37.10" viewBox="0 0 32 32"><rect x="1.70" y="1.90" width="8.9" height="8.9" fill="#f2ae37"/><rect x="11.45" y="1.90" width="8.9" height="8.9" fill="#f2ae37"/><rect x="21.20" y="1.90" width="8.9" height="8.9" fill="#f2ae37"/><rect x="11.45" y="11.65" width="8.9" height="8.9" fill="#fbfbfb"/><rect x="21.20" y="11.65" width="8.9" height="8.9" fill="#f2ae37"/><rect x="1.70" y="21.40" width="8.9" height="8.9" fill="#fbfbfb"/><rect x="11.45" y="21.40" width="8.9" height="8.9" fill="#fbfbfb"/><rect x="21.20" y="21.40" width="8.9" height="8.9" fill="#fbfbfb"/></svg>
<div class="t " style="left:131.20px;top:1576.30px;font-size:30.16px;color:#cccccc;"><span id="t33" style="display:inline-block;transform-origin:0 50%;transform:scaleX(1.0620)">pnpm-lock.yaml</span></div>
<svg class="s" style="left:80.20px;top:1630.05px;" width="37.10" height="37.10" viewBox="0 0 32 32"><rect x="1.70" y="1.90" width="8.9" height="8.9" fill="#f2ae37"/><rect x="11.45" y="1.90" width="8.9" height="8.9" fill="#f2ae37"/><rect x="21.20" y="1.90" width="8.9" height="8.9" fill="#f2ae37"/><rect x="11.45" y="11.65" width="8.9" height="8.9" fill="#fbfbfb"/><rect x="21.20" y="11.65" width="8.9" height="8.9" fill="#f2ae37"/><rect x="1.70" y="21.40" width="8.9" height="8.9" fill="#fbfbfb"/><rect x="11.45" y="21.40" width="8.9" height="8.9" fill="#fbfbfb"/><rect x="21.20" y="21.40" width="8.9" height="8.9" fill="#fbfbfb"/></svg>
<div class="t " style="left:131.20px;top:1627.60px;font-size:30.16px;color:#cccccc;"><span id="t34" style="display:inline-block;transform-origin:0 50%;transform:scaleX(1.0513)">pnpm-workspace.yaml</span></div>
<div class="r" style="left:1.20px;top:2259.50px;width:713.80px;height:2.00px;background:#2b2b2b;"></div>
<svg class="s" style="left:15.60px;top:2271.60px;" width="20.00" height="28.00" viewBox="0 0 20 28"><path d="M4.6,3.4 L15.2,14 L4.6,24.6" fill="none" stroke="#cccccc" stroke-width="2.4" stroke-linejoin="miter"/></svg>
<div class="t " style="left:48.20px;top:2263.60px;font-size:25.5px;color:#cccccc;font-weight:bold;"><span id="t35" style="display:inline-block;transform-origin:0 50%;transform:scaleX(1.0314)">OUTLINE</span></div>
<div class="r" style="left:1.20px;top:2310.50px;width:713.80px;height:2.00px;background:#2b2b2b;"></div>
<svg class="s" style="left:15.60px;top:2322.80px;" width="20.00" height="28.00" viewBox="0 0 20 28"><path d="M4.6,3.4 L15.2,14 L4.6,24.6" fill="none" stroke="#cccccc" stroke-width="2.4" stroke-linejoin="miter"/></svg>
<div class="t " style="left:48.20px;top:2314.80px;font-size:25.5px;color:#cccccc;font-weight:bold;"><span id="t36" style="display:inline-block;transform-origin:0 50%;transform:scaleX(1.0339)">TIMELINE</span></div>
<div class="r" style="left:717.00px;top:83.40px;width:1587.00px;height:1.80px;background:#2b2b2b;"></div>
<div class="r" style="left:717.00px;top:4.00px;width:326.50px;height:81.40px;background:#1f1f1f;"></div>
<div class="r" style="left:717.00px;top:3.60px;width:326.50px;height:2.20px;background:#2f74c6;"></div>
<div class="r" style="left:1043.30px;top:4.00px;width:2.00px;height:79.60px;background:#2b2b2b;"></div>
<svg class="s" style="left:740.00px;top:26.45px;" width="37.10" height="37.10" viewBox="0 0 32 32"><path fill-rule="evenodd" d="M2,10.555H30v9.335H16v1.556H9.778V19.889H2Zm1.556,7.779H6.667V13.666H8.222v4.667H9.778V12.111H3.556Zm7.778-6.223v7.779h3.111V18.334h3.111V12.111Zm3.111,1.556H16v3.112H14.444Zm4.667-1.556v6.223h3.111V13.666h1.556v4.667h1.556V13.666h1.556v4.667h1.556V12.111Z" fill="#c9463f"/></svg>
<div class="t " style="left:792.20px;top:22.40px;font-size:30.16px;color:#ffffff;"><span id="t37" style="display:inline-block;transform-origin:0 50%;transform:scaleX(1.0407)">package.json</span></div>
<svg class="s" style="left:998.60px;top:33.10px;" width="24.00" height="24.00" viewBox="0 0 24 24"><path d="M2.4000000000000004,2.4000000000000004 L21.6,21.6 M21.6,2.4000000000000004 L2.4000000000000004,21.6" fill="none" stroke="#ffffff" stroke-width="2.4"/></svg>
<svg class="s" style="left:755.00px;top:91.45px;" width="37.10" height="37.10" viewBox="0 0 32 32"><path fill-rule="evenodd" d="M2,10.555H30v9.335H16v1.556H9.778V19.889H2Zm1.556,7.779H6.667V13.666H8.222v4.667H9.778V12.111H3.556Zm7.778-6.223v7.779h3.111V18.334h3.111V12.111Zm3.111,1.556H16v3.112H14.444Zm4.667-1.556v6.223h3.111V13.666h1.556v4.667h1.556V13.666h1.556v4.667h1.556V12.111Z" fill="#c9463f"/></svg>
<div class="t " style="left:806.60px;top:88.80px;font-size:30.16px;color:#a9a9a9;"><span id="t38" style="display:inline-block;transform-origin:0 50%;transform:scaleX(1.0396)">package.json</span></div>
<svg class="s" style="left:1000.00px;top:96.00px;" width="24.00" height="30.00" viewBox="0 0 24 30"><path d="M5.4,4.4 L16.6,15 L5.4,25.6" fill="none" stroke="#a9a9a9" stroke-width="2.3"/></svg>
<div class="t " style="left:1033.60px;top:88.80px;font-size:30.16px;color:#d0d0d0;letter-spacing:7.4px;"><span id="t39">{}</span></div>
<div class="t " style="left:1073.80px;top:88.80px;font-size:30.16px;color:#a9a9a9;"><span id="t40" style="display:inline-block;transform-origin:0 50%;transform:scaleX(1.0736)">scripts</span></div>
<div class="r" style="left:876.4px;top:150.3px;width:4.2px;height:4.2px;border-radius:50%;background:#999999"></div>
<div class="r" style="left:888.1px;top:150.3px;width:4.2px;height:4.2px;border-radius:50%;background:#999999"></div>
<div class="r" style="left:899.8px;top:150.3px;width:4.2px;height:4.2px;border-radius:50%;background:#999999"></div>
<div class="r" style="left:871.00px;top:333.00px;width:1433.00px;height:41.36px;background:transparent;box-sizing:border-box;border-top:3.2px solid #2a2a2a;border-bottom:3.2px solid #2a2a2a;border-left:0;"></div>
<div class="r" style="left:871.20px;top:213.50px;width:2.40px;height:83.92px;background:#404040;"></div>
<div class="r" style="left:871.20px;top:332.40px;width:2.40px;height:167.04px;background:#404040;"></div>
<div class="r" style="left:905.00px;top:374.20px;width:2.40px;height:83.52px;background:#707070;"></div>
<div class="t m" style="left:793.60px;top:170.40px;font-size:28.0px;color:#6e7681;font-family:"DejaVu Sans Mono", "Liberation Mono", monospace;"><span id="t41">1</span></div>
<div class="t m" style="left:793.60px;top:212.20px;font-size:28.0px;color:#6e7681;font-family:"DejaVu Sans Mono", "Liberation Mono", monospace;"><span id="t42">2</span></div>
<div class="t m" style="left:793.60px;top:253.90px;font-size:28.0px;color:#6e7681;font-family:"DejaVu Sans Mono", "Liberation Mono", monospace;"><span id="t43">3</span></div>
<div class="t m" style="left:793.60px;top:331.10px;font-size:28.0px;color:#cccccc;font-family:"DejaVu Sans Mono", "Liberation Mono", monospace;"><span id="t44">4</span></div>
<div class="t m" style="left:793.60px;top:372.90px;font-size:28.0px;color:#6e7681;font-family:"DejaVu Sans Mono", "Liberation Mono", monospace;"><span id="t45">5</span></div>
<div class="t m" style="left:793.60px;top:414.60px;font-size:28.0px;color:#6e7681;font-family:"DejaVu Sans Mono", "Liberation Mono", monospace;"><span id="t46">6</span></div>
<div class="t m" style="left:793.60px;top:456.40px;font-size:28.0px;color:#6e7681;font-family:"DejaVu Sans Mono", "Liberation Mono", monospace;"><span id="t47">7</span></div>
<div class="t m" style="left:793.60px;top:498.20px;font-size:28.0px;color:#6e7681;font-family:"DejaVu Sans Mono", "Liberation Mono", monospace;"><span id="t48">8</span></div>
<div class="t m" style="left:793.60px;top:539.90px;font-size:28.0px;color:#6e7681;font-family:"DejaVu Sans Mono", "Liberation Mono", monospace;"><span id="t49">9</span></div>
<div class="t m" style="left:868.70px;top:170.40px;font-size:28.0px"><span style="color:#f6d549;position:relative;left:2.2px">{</span></div>
<div class="t m" style="left:868.70px;top:212.20px;font-size:28.0px"><span style="color:#cccccc">  </span><span style="color:#a2dbfc">&quot;name&quot;</span><span style="color:#cccccc">: </span><span style="color:#cb937a">&quot;pnpm<span class="h">-</span>monorepo&quot;</span><span style="color:#cccccc">,</span></div>
<div class="t m" style="left:868.70px;top:253.90px;font-size:28.0px"><span style="color:#cccccc">  </span><span style="color:#a2dbfc">&quot;version&quot;</span><span style="color:#cccccc">: </span><span style="color:#cb937a">&quot;1.0.0&quot;</span><span style="color:#cccccc">,</span></div>
<div class="t m" style="left:868.70px;top:331.10px;font-size:28.0px"><span style="color:#cccccc">  </span><span style="color:#a2dbfc">&quot;scripts&quot;</span><span style="color:#cccccc">: </span><span style="color:#cf78d3;position:relative;left:2.2px">{</span><span style="color:#cccccc">      </span><span style="color:#585858">You, 17 minutes ago • Initial commit</span></div>
<div class="t m" style="left:868.70px;top:372.90px;font-size:28.0px"><span style="color:#cccccc">    </span><span style="color:#a2dbfc">&quot;build<span class="h">-</span>keycloak<span class="h">-</span>theme&quot;</span><span style="color:#cccccc">: </span><span style="color:#cb937a">&quot;pnpm <span class="h">-</span><span class="h">-</span>filter keycloak<span class="h">-</span>theme run build<span class="h">-</span>keycloak<span class="h">-</span>theme&quot;</span><span style="color:#cccccc">,</span></div>
<div class="t m" style="left:868.70px;top:414.60px;font-size:28.0px"><span style="color:#cccccc">    </span><span style="color:#a2dbfc">&quot;start<span class="h">-</span>keycloak&quot;</span><span style="color:#cccccc">: </span><span style="color:#cb937a">&quot;keycloakify start<span class="h">-</span>keycloak <span class="h">-</span>p apps/keycloak<span class="h">-</span>theme&quot;</span></div>
<div class="t m" style="left:868.70px;top:456.40px;font-size:28.0px"><span style="color:#cccccc">  </span><span style="color:#cf78d3;position:relative;left:2.2px">}</span></div>
<div class="t m" style="left:868.70px;top:498.20px;font-size:28.0px"><span style="color:#f6d549;position:relative;left:2.2px">}</span></div>
<svg class="s" style="left:908.00px;top:296.00px;" width="34.00" height="36.00" viewBox="0 0 34 36"><path d="M7.6,5.4 L25.6,17.8 L7.6,30.2Z" fill="none" stroke="#999999" stroke-width="2.4" stroke-linejoin="miter"/></svg>
<div class="t " style="left:948.40px;top:290.00px;font-size:23.4px;color:#999999;-webkit-text-stroke-width:0.3px;"><span id="t50" style="display:inline-block;transform-origin:0 50%;transform:scaleX(1.0442)">Debug</span></div>
<div class="r" style="left:717.00px;top:871.00px;width:1587.00px;height:2.00px;background:#2b2b2b;"></div>
<div class="t " style="left:764.60px;top:892.50px;font-size:24.8px;color:#9d9d9d;-webkit-text-stroke-width:0.25px;"><span id="t51" style="display:inline-block;transform-origin:0 50%;transform:scaleX(1.0361)">OUTPUT</span></div>
<div class="t " style="left:927.40px;top:892.50px;font-size:24.8px;color:#9d9d9d;-webkit-text-stroke-width:0.25px;"><span id="t52" style="display:inline-block;transform-origin:0 50%;transform:scaleX(1.0128)">DEBUG CONSOLE</span></div>
<div class="t " style="left:1203.20px;top:892.50px;font-size:24.8px;color:#e7e7e7;-webkit-text-stroke-width:0.25px;"><span id="t53" style="display:inline-block;transform-origin:0 50%;transform:scaleX(1.0202)">TERMINAL</span></div>
<div class="t " style="left:1388.40px;top:892.50px;font-size:24.8px;color:#9d9d9d;-webkit-text-stroke-width:0.25px;"><span id="t54" style="display:inline-block;transform-origin:0 50%;transform:scaleX(0.9992)">PORTS</span></div>
<div class="t " style="left:1530.00px;top:892.50px;font-size:24.8px;color:#9d9d9d;-webkit-text-stroke-width:0.25px;"><span id="t55" style="display:inline-block;transform-origin:0 50%;transform:scaleX(1.0105)">GITLENS</span></div>
<div class="t " style="left:1694.10px;top:892.50px;font-size:24.8px;color:#9d9d9d;-webkit-text-stroke-width:0.25px;"><span id="t56" style="display:inline-block;transform-origin:0 50%;transform:scaleX(1.0393)">COMMENTS</span></div>
<div class="t " style="left:1900.30px;top:892.50px;font-size:24.8px;color:#9d9d9d;-webkit-text-stroke-width:0.25px;"><span id="t57" style="display:inline-block;transform-origin:0 50%;transform:scaleX(1.0080)">PROBLEMS</span></div>
<div class="r" style="left:1198.20px;top:938.50px;width:138.60px;height:2.00px;background:#2f74c6;"></div>
<div class="t m tm" style="left:763.30px;top:968.60px;font-size:28.0px;letter-spacing:-0.381px"><span style="color:#7c7c7c">dist/assets/</span><span style="color:#56afd6">it<span class="h">-</span>0We9pbsW.js</span><span>                                </span><span style="color:#7c7c7c;font-weight:bold">14.44 kB</span><span style="color:#7c7c7c"> │ gzip:  4.72 kB</span></div>
<div class="t m tm" style="left:763.30px;top:1001.55px;font-size:28.0px;letter-spacing:-0.381px"><span style="color:#7c7c7c">dist/assets/</span><span style="color:#56afd6">tr<span class="h">-</span>DJYkfU6S.js</span><span>                                </span><span style="color:#7c7c7c;font-weight:bold">14.58 kB</span><span style="color:#7c7c7c"> │ gzip:  5.21 kB</span></div>
<div class="t m tm" style="left:763.30px;top:1034.50px;font-size:28.0px;letter-spacing:-0.381px"><span style="color:#7c7c7c">dist/assets/</span><span style="color:#56afd6">pt<span class="h">-</span>BR<span class="h">-</span>CnhmrYxP.js</span><span>                             </span><span style="color:#7c7c7c;font-weight:bold">14.88 kB</span><span style="color:#7c7c7c"> │ gzip:  5.05 kB</span></div>
<div class="t m tm" style="left:763.30px;top:1067.45px;font-size:28.0px;letter-spacing:-0.381px"><span style="color:#7c7c7c">dist/assets/</span><span style="color:#56afd6">th<span class="h">-</span>ClRUhnyE.js</span><span>                                </span><span style="color:#7c7c7c;font-weight:bold">15.06 kB</span><span style="color:#7c7c7c"> │ gzip:  6.07 kB</span></div>
<div class="t m tm" style="left:763.30px;top:1100.40px;font-size:28.0px;letter-spacing:-0.381px"><span style="color:#7c7c7c">dist/assets/</span><span style="color:#56afd6">ar<span class="h">-</span>v8OY6Ooa.js</span><span>                                </span><span style="color:#7c7c7c;font-weight:bold">15.47 kB</span><span style="color:#7c7c7c"> │ gzip:  6.28 kB</span></div>
<div class="t m tm" style="left:763.30px;top:1133.35px;font-size:28.0px;letter-spacing:-0.381px"><span style="color:#7c7c7c">dist/assets/</span><span style="color:#56afd6">de<span class="h">-</span>B<span class="h">-</span>ae<span style="position:relative;top:-3.1px;-webkit-text-stroke:1.4px currentColor">_</span>uF3.js</span><span>                                </span><span style="color:#7c7c7c;font-weight:bold">15.61 kB</span><span style="color:#7c7c7c"> │ gzip:  5.12 kB</span></div>
<div class="t m tm" style="left:763.30px;top:1166.30px;font-size:28.0px;letter-spacing:-0.381px"><span style="color:#7c7c7c">dist/assets/</span><span style="color:#56afd6">nl<span class="h">-</span>DuF2o4JD.js</span><span>                                </span><span style="color:#7c7c7c;font-weight:bold">15.78 kB</span><span style="color:#7c7c7c"> │ gzip:  5.28 kB</span></div>
<div class="t m tm" style="left:763.30px;top:1199.25px;font-size:28.0px;letter-spacing:-0.381px"><span style="color:#7c7c7c">dist/assets/</span><span style="color:#56afd6">pl<span class="h">-</span>B5hpsQq5.js</span><span>                                </span><span style="color:#7c7c7c;font-weight:bold">15.86 kB</span><span style="color:#7c7c7c"> │ gzip:  5.67 kB</span></div>
<div class="t m tm" style="left:763.30px;top:1232.20px;font-size:28.0px;letter-spacing:-0.381px"><span style="color:#7c7c7c">dist/assets/</span><span style="color:#56afd6">fa<span class="h">-</span>DUveB5F8.js</span><span>                                </span><span style="color:#7c7c7c;font-weight:bold">15.89 kB</span><span style="color:#7c7c7c"> │ gzip:  6.44 kB</span></div>
<div class="t m tm" style="left:763.30px;top:1265.15px;font-size:28.0px;letter-spacing:-0.381px"><span style="color:#7c7c7c">dist/assets/</span><span style="color:#56afd6">nl<span class="h">-</span>8d7VZNr1.js</span><span>                                </span><span style="color:#7c7c7c;font-weight:bold">16.00 kB</span><span style="color:#7c7c7c"> │ gzip:  5.18 kB</span></div>
<div class="t m tm" style="left:763.30px;top:1298.10px;font-size:28.0px;letter-spacing:-0.381px"><span style="color:#7c7c7c">dist/assets/</span><span style="color:#56afd6">pl<span class="h">-</span>DrMiAMGV.js</span><span>                                </span><span style="color:#7c7c7c;font-weight:bold">16.18 kB</span><span style="color:#7c7c7c"> │ gzip:  5.67 kB</span></div>
<div class="t m tm" style="left:763.30px;top:1331.05px;font-size:28.0px;letter-spacing:-0.381px"><span style="color:#7c7c7c">dist/assets/</span><span style="color:#56afd6">zh<span class="h">-</span>CN<span class="h">-</span>cAI<span style="position:relative;top:-3.1px;-webkit-text-stroke:1.4px currentColor">_</span>Ld6m.js</span><span>                             </span><span style="color:#7c7c7c;font-weight:bold">16.68 kB</span><span style="color:#7c7c7c"> │ gzip:  8.76 kB</span></div>
<div class="t m tm" style="left:763.30px;top:1364.00px;font-size:28.0px;letter-spacing:-0.381px"><span style="color:#7c7c7c">dist/assets/</span><span style="color:#56afd6">uk<span class="h">-</span>4lL<span class="h">-</span>m0L2.js</span><span>                                </span><span style="color:#7c7c7c;font-weight:bold">16.77 kB</span><span style="color:#7c7c7c"> │ gzip:  6.66 kB</span></div>
<div class="t m tm" style="left:763.30px;top:1396.95px;font-size:28.0px;letter-spacing:-0.381px"><span style="color:#7c7c7c">dist/assets/</span><span style="color:#56afd6">fi<span class="h">-</span>ClnrGawb.js</span><span>                                </span><span style="color:#7c7c7c;font-weight:bold">16.93 kB</span><span style="color:#7c7c7c"> │ gzip:  6.13 kB</span></div>
<div class="t m tm" style="left:763.30px;top:1429.90px;font-size:28.0px;letter-spacing:-0.381px"><span style="color:#7c7c7c">dist/assets/</span><span style="color:#56afd6">hu<span class="h">-</span>CtzrRJz5.js</span><span>                                </span><span style="color:#7c7c7c;font-weight:bold">17.40 kB</span><span style="color:#7c7c7c"> │ gzip:  6.16 kB</span></div>
<div class="t m tm" style="left:763.30px;top:1462.85px;font-size:28.0px;letter-spacing:-0.381px"><span style="color:#7c7c7c">dist/assets/</span><span style="color:#56afd6">el<span class="h">-</span>D3xavGe0.js</span><span>                                </span><span style="color:#7c7c7c;font-weight:bold">17.64 kB</span><span style="color:#7c7c7c"> │ gzip:  7.28 kB</span></div>
<div class="t m tm" style="left:763.30px;top:1495.80px;font-size:28.0px;letter-spacing:-0.381px"><span style="color:#7c7c7c">dist/assets/</span><span style="color:#56afd6">es<span class="h">-</span>YeavmCkW.js</span><span>                                </span><span style="color:#7c7c7c;font-weight:bold">17.71 kB</span><span style="color:#7c7c7c"> │ gzip:  6.06 kB</span></div>
<div class="t m tm" style="left:763.30px;top:1528.75px;font-size:28.0px;letter-spacing:-0.381px"><span style="color:#7c7c7c">dist/assets/</span><span style="color:#56afd6">ca<span class="h">-</span>DTnyHOx8.js</span><span>                                </span><span style="color:#7c7c7c;font-weight:bold">17.73 kB</span><span style="color:#7c7c7c"> │ gzip:  5.72 kB</span></div>
<div class="t m tm" style="left:763.30px;top:1561.70px;font-size:28.0px;letter-spacing:-0.381px"><span style="color:#7c7c7c">dist/assets/</span><span style="color:#56afd6">da<span class="h">-</span>JPjTmTCk.js</span><span>                                </span><span style="color:#7c7c7c;font-weight:bold">17.76 kB</span><span style="color:#7c7c7c"> │ gzip:  5.71 kB</span></div>
<div class="t m tm" style="left:763.30px;top:1594.65px;font-size:28.0px;letter-spacing:-0.381px"><span style="color:#7c7c7c">dist/assets/</span><span style="color:#56afd6">it<span class="h">-</span>CmrukNHB.js</span><span>                                </span><span style="color:#7c7c7c;font-weight:bold">18.53 kB</span><span style="color:#7c7c7c"> │ gzip:  5.75 kB</span></div>
<div class="t m tm" style="left:763.30px;top:1627.60px;font-size:28.0px;letter-spacing:-0.381px"><span style="color:#7c7c7c">dist/assets/</span><span style="color:#56afd6">pt<span class="h">-</span>BR<span class="h">-</span>CvJeqN7v.js</span><span>                             </span><span style="color:#7c7c7c;font-weight:bold">20.55 kB</span><span style="color:#7c7c7c"> │ gzip:  6.52 kB</span></div>
<div class="t m tm" style="left:763.30px;top:1660.55px;font-size:28.0px;letter-spacing:-0.381px"><span style="color:#7c7c7c">dist/assets/</span><span style="color:#56afd6">fi<span class="h">-</span>pyiGp8E<span style="position:relative;top:-3.1px;-webkit-text-stroke:1.4px currentColor">_</span>.js</span><span>                                </span><span style="color:#7c7c7c;font-weight:bold">22.36 kB</span><span style="color:#7c7c7c"> │ gzip:  7.23 kB</span></div>
<div class="t m tm" style="left:763.30px;top:1693.50px;font-size:28.0px;letter-spacing:-0.381px"><span style="color:#7c7c7c">dist/assets/</span><span style="color:#56afd6">de<span class="h">-</span>IT483YX6.js</span><span>                                </span><span style="color:#7c7c7c;font-weight:bold">24.14 kB</span><span style="color:#7c7c7c"> │ gzip:  7.36 kB</span></div>
<div class="t m tm" style="left:763.30px;top:1726.45px;font-size:28.0px;letter-spacing:-0.381px"><span style="color:#7c7c7c">dist/assets/</span><span style="color:#56afd6">fr<span class="h">-</span>DJQgrVMW.js</span><span>                                </span><span style="color:#7c7c7c;font-weight:bold">24.74 kB</span><span style="color:#7c7c7c"> │ gzip:  7.33 kB</span></div>
<div class="t m tm" style="left:763.30px;top:1759.40px;font-size:28.0px;letter-spacing:-0.381px"><span style="color:#7c7c7c">dist/assets/</span><span style="color:#56afd6">th<span class="h">-</span>BeXV8m3U.js</span><span>                                </span><span style="color:#7c7c7c;font-weight:bold">24.92 kB</span><span style="color:#7c7c7c"> │ gzip:  9.11 kB</span></div>
<div class="t m tm" style="left:763.30px;top:1792.35px;font-size:28.0px;letter-spacing:-0.381px"><span style="color:#7c7c7c">dist/assets/</span><span style="color:#56afd6">fa<span class="h">-</span>D1dA<span style="position:relative;top:-3.1px;-webkit-text-stroke:1.4px currentColor">_</span>RIQ.js</span><span>                                </span><span style="color:#7c7c7c;font-weight:bold">25.13 kB</span><span style="color:#7c7c7c"> │ gzip:  9.31 kB</span></div>
<div class="t m tm" style="left:763.30px;top:1825.30px;font-size:28.0px;letter-spacing:-0.381px"><span style="color:#7c7c7c">dist/assets/</span><span style="color:#56afd6">ar<span class="h">-</span>Wj68h1dE.js</span><span>                                </span><span style="color:#7c7c7c;font-weight:bold">25.27 kB</span><span style="color:#7c7c7c"> │ gzip:  9.11 kB</span></div>
<div class="t m tm" style="left:763.30px;top:1858.25px;font-size:28.0px;letter-spacing:-0.381px"><span style="color:#7c7c7c">dist/assets/</span><span style="color:#56afd6">cs<span class="h">-</span>BuzK37Bn.js</span><span>                                </span><span style="color:#7c7c7c;font-weight:bold">25.74 kB</span><span style="color:#7c7c7c"> │ gzip:  8.71 kB</span></div>
<div class="t m tm" style="left:763.30px;top:1891.20px;font-size:28.0px;letter-spacing:-0.381px"><span style="color:#7c7c7c">dist/assets/</span><span style="color:#56afd6">UserProfileFormFields<span class="h">-</span>CKhTA927.js</span><span>             </span><span style="color:#7c7c7c;font-weight:bold">26.46 kB</span><span style="color:#7c7c7c"> │ gzip:  7.03 kB</span></div>
<div class="t m tm" style="left:763.30px;top:1924.15px;font-size:28.0px;letter-spacing:-0.381px"><span style="color:#7c7c7c">dist/assets/</span><span style="color:#56afd6">sk<span class="h">-</span>d3YJQPyt.js</span><span>                                </span><span style="color:#7c7c7c;font-weight:bold">26.70 kB</span><span style="color:#7c7c7c"> │ gzip:  8.99 kB</span></div>
<div class="t m tm" style="left:763.30px;top:1957.10px;font-size:28.0px;letter-spacing:-0.381px"><span style="color:#7c7c7c">dist/assets/</span><span style="color:#56afd6">KcPage<span class="h">-</span>C<span class="h">-</span>mCam<span style="position:relative;top:-3.1px;-webkit-text-stroke:1.4px currentColor">_</span>T.js</span><span>                            </span><span style="color:#7c7c7c;font-weight:bold">27.83 kB</span><span style="color:#7c7c7c"> │ gzip:  9.03 kB</span></div>
<div class="t m tm" style="left:763.30px;top:1990.05px;font-size:28.0px;letter-spacing:-0.381px"><span style="color:#7c7c7c">dist/assets/</span><span style="color:#56afd6">uk<span class="h">-</span>BaKI4Lg2.js</span><span>                                </span><span style="color:#7c7c7c;font-weight:bold">27.83 kB</span><span style="color:#7c7c7c"> │ gzip:  9.87 kB</span></div>
<div class="t m tm" style="left:763.30px;top:2023.00px;font-size:28.0px;letter-spacing:-0.381px"><span style="color:#7c7c7c">dist/assets/</span><span style="color:#56afd6">el<span class="h">-</span>Cw2yud<span style="position:relative;top:-3.1px;-webkit-text-stroke:1.4px currentColor">_</span>s.js</span><span>                                </span><span style="color:#7c7c7c;font-weight:bold">27.89 kB</span><span style="color:#7c7c7c"> │ gzip: 10.27 kB</span></div>
<div class="t m tm" style="left:763.30px;top:2055.95px;font-size:28.0px;letter-spacing:-0.381px"><span style="color:#7c7c7c">dist/assets/</span><span style="color:#56afd6">hu<span class="h">-</span>9X5NByxQ.js</span><span>                                </span><span style="color:#7c7c7c;font-weight:bold">28.78 kB</span><span style="color:#7c7c7c"> │ gzip:  9.30 kB</span></div>
<div class="t m tm" style="left:763.30px;top:2088.90px;font-size:28.0px;letter-spacing:-0.381px"><span style="color:#7c7c7c">dist/assets/</span><span style="color:#56afd6">ca<span class="h">-</span>Bef6bUbt.js</span><span>                                </span><span style="color:#7c7c7c;font-weight:bold">29.02 kB</span><span style="color:#7c7c7c"> │ gzip:  8.58 kB</span></div>
<div class="t m tm" style="left:763.30px;top:2121.85px;font-size:28.0px;letter-spacing:-0.381px"><span style="color:#7c7c7c">dist/assets/</span><span style="color:#56afd6">es<span class="h">-</span>Bzkgs6h5.js</span><span>                                </span><span style="color:#7c7c7c;font-weight:bold">29.68 kB</span><span style="color:#7c7c7c"> │ gzip:  9.25 kB</span></div>
<div class="t m tm" style="left:763.30px;top:2154.80px;font-size:28.0px;letter-spacing:-0.381px"><span style="color:#7c7c7c">dist/assets/</span><span style="color:#56afd6">KcPage<span class="h">-</span>m4vQlDIC.js</span><span>                            </span><span style="color:#7c7c7c;font-weight:bold">52.67 kB</span><span style="color:#7c7c7c"> │ gzip: 15.52 kB</span></div>
<div class="t m tm" style="left:763.30px;top:2187.75px;font-size:28.0px;letter-spacing:-0.381px"><span style="color:#7c7c7c">dist/assets/</span><span style="color:#56afd6">index<span class="h">-</span>DazvNMDZ.js</span><span>                            </span><span style="color:#7c7c7c;font-weight:bold">144.02 kB</span><span style="color:#7c7c7c"> │ gzip: 46.43 kB</span></div>
<div class="t m tm" style="left:763.30px;top:2220.70px;font-size:28.0px;letter-spacing:-0.381px"><span style="color:#63c58b">✓ built in 714ms</span></div>
<div class="t m tm" style="left:763.30px;top:2253.65px;font-size:28.0px;letter-spacing:-0.381px"><span style="color:#56afd6">keycloakify v10.0.0<span class="h">-</span>rc.97</span><span style="color:#63c58b"> Building the keycloak theme in ./dist<span style="position:relative;top:-3.1px;-webkit-text-stroke:1.4px currentColor">_</span>keycloak ...</span></div>
<div class="t m tm" style="left:763.30px;top:2286.60px;font-size:28.0px;letter-spacing:-0.381px"><span style="color:#63c58b">✓ keycloak theme built in 12.36s</span></div>
<div class="t m tm" style="left:763.30px;top:2319.55px;font-size:28.0px;letter-spacing:-0.381px"><span style="color:#63c58b;font-weight:bold">➜</span><span>  </span><span style="color:#63c58b;font-weight:bold">joseph</span><span> </span><span style="color:#63c58b;font-weight:bold">@</span><span> </span><span style="color:#56afd6;font-weight:bold">MBPM2</span><span> </span><span style="color:#5b8fe6;font-weight:bold">~/github/pnpm-monorepo</span><span> </span><span style="color:#5b8fe6;font-weight:bold">$</span><span> </span></div>
<div class="r" style="left:1471.80px;top:2326.00px;width:16.40px;height:30.00px;background:transparent;box-sizing:border-box;border:2.2px solid #e8e8e8;"></div>
</div>
</body></html>
